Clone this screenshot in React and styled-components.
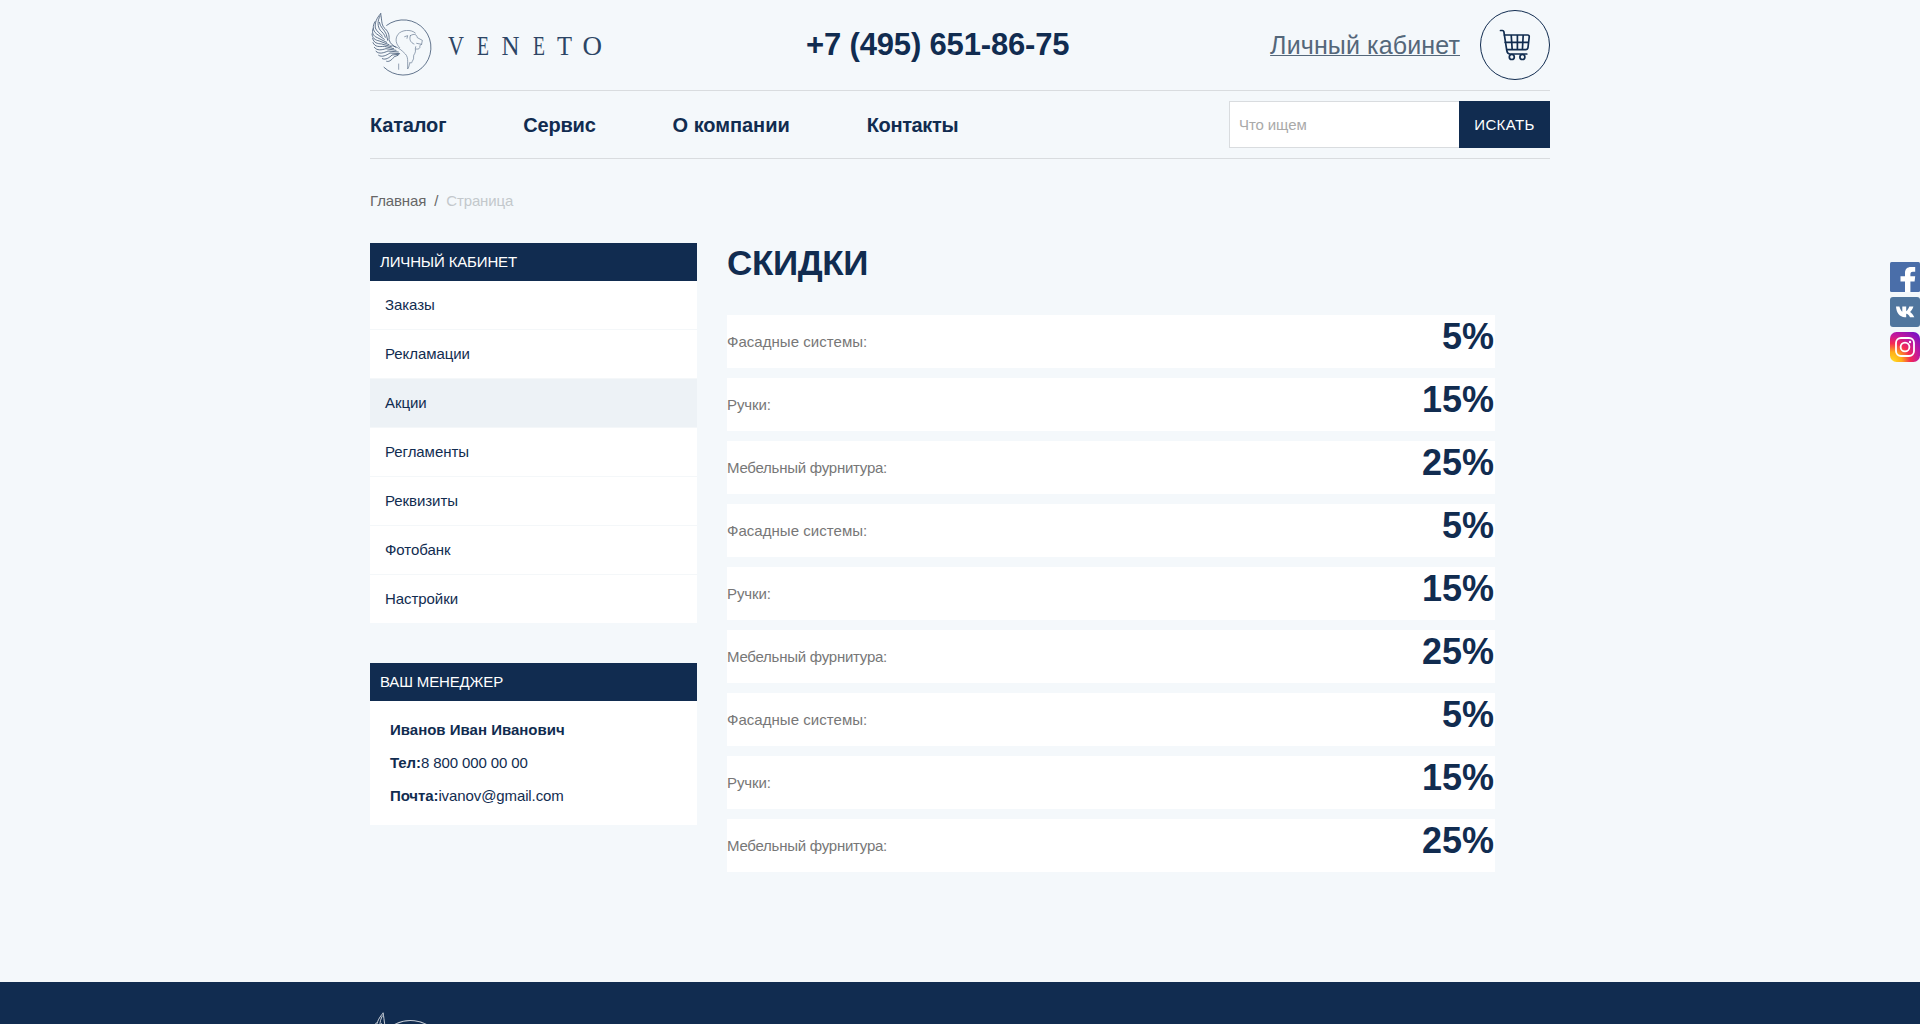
import React from "react";
import styled, { createGlobalStyle } from "styled-components";

const navy = "#112c50";
const line = "#d9dcdf";

const Global = createGlobalStyle`
  * { box-sizing: border-box; }
  html, body { margin: 0; height: 100%; overflow: hidden; }
  body {
    background: #f4f8fb;
    color: ${navy};
    font-family: "Liberation Sans", Arial, sans-serif;
    font-size: 15px;
    line-height: 18px;
  }
  a { color: inherit; text-decoration: none; }
`;

const Page = styled.div`
  height: 1024px;
  overflow: hidden;
  display: flex;
  flex-direction: column;
`;
const Container = styled.div`
  width: 1180px;
  margin: 0 auto;
`;
const TopBar = styled.header`
  height: 91px;
  display: flex;
  align-items: center;
  border-bottom: 1px solid ${line};
`;
const LogoLink = styled.a`
  display: block;
  width: 436px;
  height: 90px;
`;
const Phone = styled.a`
  font-size: 31px;
  line-height: 36px;
  font-weight: 700;
  letter-spacing: -0.16px;
`;
const Account = styled.div`
  margin-left: auto;
  display: flex;
  align-items: center;
  gap: 20px;
`;
const AccountLink = styled.a`
  color: #54677a;
  font-size: 25px;
  line-height: 30px;
  letter-spacing: 0.13px;
  text-decoration: underline;
  text-decoration-thickness: 1px;
`;
const CartButton = styled.a`
  width: 70px;
  height: 70px;
  border: 1px solid ${navy};
  border-radius: 50%;
  display: grid;
  place-items: center;
`;
const NavBar = styled.nav`
  height: 68px;
  display: flex;
  align-items: center;
  border-bottom: 1px solid ${line};
`;
const NavList = styled.div`
  display: flex;
  gap: 77px;
  font-size: 20px;
  line-height: 24px;
  font-weight: 700;
`;
const NavLink = styled.a`
  letter-spacing: ${(p) => p.$tracking}px;
`;
const Search = styled.form`
  margin-left: auto;
  display: flex;
  height: 47px;
`;
const SearchInput = styled.input`
  width: 230px;
  padding: 0 10px 0 9px;
  border: 1px solid ${line};
  border-right: 0;
  border-radius: 0;
  background: #fff;
  font: 15px "Liberation Sans", Arial, sans-serif;
  letter-spacing: -0.1px;
  &::placeholder { color: #a9a9a9; }
`;
const SearchButton = styled.button`
  width: 91px;
  padding: 0;
  border: 0;
  background: ${navy};
  color: #fff;
  font: 15px "Liberation Sans", Arial, sans-serif;
  letter-spacing: 0.4px;
`;
const Crumbs = styled.div`
  display: flex;
  gap: 8px;
  margin-top: 33px;
  color: #666;
  letter-spacing: -0.13px;
`;
const CurrentCrumb = styled.span`
  color: #c3c8cc;
`;
const Columns = styled.div`
  display: flex;
  gap: 30px;
  margin-top: 33px;
`;
const Sidebar = styled.aside`
  width: 327px;
  display: flex;
  flex-direction: column;
  gap: 40px;
`;
const Panel = styled.section`
  background: #fff;
`;
const PanelTitle = styled.div`
  height: 38px;
  padding: 0 10px;
  line-height: 38px;
  background: ${navy};
  color: #fff;
  text-transform: uppercase;
  letter-spacing: -0.15px;
`;
const MenuItem = styled.a`
  display: block;
  height: 49px;
  padding: 0 15px;
  line-height: 48px;
  letter-spacing: -0.06px;
  border-bottom: 1px solid #f4f7f9;
  background: ${(p) => (p.$active ? "#edf2f6" : "#fff")};
  &:last-child { height: 48px; border-bottom: 0; }
`;
const ManagerInfo = styled.div`
  height: 124px;
  padding: 20px;
  display: flex;
  flex-direction: column;
  gap: 15px;
`;
const Contact = styled.div`
  letter-spacing: -0.1px;
`;
const Main = styled.main`
  width: 768px;
`;
const Title = styled.h1`
  margin: 0;
  font-size: 35px;
  line-height: 40px;
  height: 72px;
  letter-spacing: -0.35px;
`;
const Discounts = styled.div`
  display: flex;
  flex-direction: column;
  gap: 10px;
`;
const DiscountRow = styled.div`
  height: 53px;
  display: flex;
  justify-content: space-between;
  background: #fff;
  line-height: 53px;
  color: #777;
`;
const DiscountName = styled.span`
  letter-spacing: ${(p) => p.$tracking}px;
`;
const Percent = styled.span`
  padding-right: 1px;
  font-size: 36px;
  font-weight: 700;
  line-height: 43px;
  color: ${navy};
`;
const Footer = styled.footer`
  margin-top: 110px;
  height: 42px;
  flex: none;
  overflow: hidden;
  background: ${navy};
`;
const Social = styled.div`
  position: fixed;
  right: 0;
  top: 262px;
  display: flex;
  flex-direction: column;
  gap: 5px;
  svg { display: block; }
`;

function Emblem({ color }) {
  return (
    <g fill="none" stroke={color} strokeLinecap="round" strokeLinejoin="round">
      <path d="M80 76A83 83 0 1 1 72 202" strokeWidth="2.6" opacity=".75" />
      <g strokeWidth="2.4" opacity=".8">
        <path d="M62 41C50 54 44 68 46 84C50 94 58 99 67 108" />
        <path d="M62 41C66 62 64 72 72 83C83 92 89 103 87 119C91 132 99 137 108 142" />
        <path d="M60 48C52 63 52 79 61 91C67 97 74 103 76 112" />
        <path d="M58 67C60 81 73 89 79 103L83 121" />
        <path d="M45 65C37 78 38 92 49 101L73 118" />
        <path d="M39 86C35 99 39 108 52 113L80 127" />
        <path d="M36 102C37 115 45 120 58 123L87 134" />
        <path d="M38 115C41 129 52 131 65 132L94 140" />
        <path d="M39 128C45 142 59 140 73 139L101 146" />
        <path d="M43 142C51 153 65 150 78 146L108 151" />
        <path d="M48 154C58 164 72 158 84 153L115 156" />
        <path d="M56 166C66 173 79 166 90 159L119 161" />
        <path d="M67 176C77 181 88 173 96 165L116 163" />
        <path d="M80 184C89 187 97 177 103 170L114 166" />
      </g>
      <g strokeWidth="1.8" opacity=".7">
        <path d="M166 99C153 87 125 89 114 103C104 117 108 133 119 143" />
        <path d="M92 137C112 138 125 151 136 162C142 168 143 176 143 184V207C149 198 147 192 150 187C154 195 156 184 159 180C163 177 158 166 164 161C169 153 164 147 167 140" />
        <path d="M134 110L143 107L141 115M151 107C147 119 152 128 162 132M151 107C164 99 170 104 172 113L187 121L185 132L179 138C182 144 176 149 168 147M170 130L185 133" />
        <path d="M116 192V208" />
      </g>
    </g>
  );
}

const letters = [
  ["V", 448, 16],
  ["E", 477, 12],
  ["N", 501.5, 18],
  ["E", 533, 12],
  ["T", 557, 15],
  ["O", 582.5, 19.5],
];

function Logo() {
  return (
    <svg width="250" height="90" viewBox="0 0 250 90">
      <g transform="translate(-10 0) scale(.33333)">
        <Emblem color={navy} />
      </g>
      <g fill="#2c4565" fontFamily="Liberation Serif, serif" fontSize="28">
        {letters.map(([char, x, width]) => (
          <text key={x} x={x - 370} y="54.5" textLength={width} lengthAdjust="spacingAndGlyphs">
            {char}
          </text>
        ))}
      </g>
    </svg>
  );
}

function CartIcon() {
  return (
    <svg width="32" height="32" viewBox="0 0 32 32" fill="none" stroke={navy} strokeWidth="1.7" strokeLinecap="round" strokeLinejoin="round">
      <path d="M1.5 1.5H3.4Q4.6 1.5 4.9 2.8L7.8 21.7Q8.3 25 11 25H27.8" />
      <path d="M5.4 6H28.6Q30.4 6 30.2 8L29 18.5Q28.7 20.7 26.6 20.7H8M6.2 13.3H29.4M12.2 6L13.2 20.7M18.4 6V20.7M24.2 6L23.4 20.7" />
      <circle cx="12.8" cy="28" r="2.5" />
      <circle cx="23.4" cy="28" r="2.5" />
    </svg>
  );
}

const nav = [
  ["Каталог", -0.17],
  ["Сервис", -0.2],
  ["О компании", -0.04],
  ["Контакты", -0.35],
];
const menu = ["Заказы", "Рекламации", "Акции", "Регламенты", "Реквизиты", "Фотобанк", "Настройки"];
const groups = [
  ["Фасадные системы:", "5%", 0.04],
  ["Ручки:", "15%", -0.1],
  ["Мебельный фурнитура:", "25%", -0.25],
];
const discounts = [...groups, ...groups, ...groups];

export default function App() {
  return (
    <>
      <Global />
      <Page>
        <Container>
          <TopBar>
            <LogoLink><Logo /></LogoLink>
            <Phone>+7 (495) 651-86-75</Phone>
            <Account>
              <AccountLink>Личный кабинет</AccountLink>
              <CartButton><CartIcon /></CartButton>
            </Account>
          </TopBar>
          <NavBar>
            <NavList>
              {nav.map(([t, tracking]) => <NavLink key={t} $tracking={tracking}>{t}</NavLink>)}
            </NavList>
            <Search>
              <SearchInput placeholder="Что ищем" />
              <SearchButton type="button">ИСКАТЬ</SearchButton>
            </Search>
          </NavBar>
          <Crumbs>
            <a>Главная</a>
            <span>/</span>
            <CurrentCrumb>Страница</CurrentCrumb>
          </Crumbs>
          <Columns>
            <Sidebar>
              <Panel>
                <PanelTitle>Личный кабинет</PanelTitle>
                <div>
                  {menu.map((t) => <MenuItem key={t} $active={t === "Акции"}>{t}</MenuItem>)}
                </div>
              </Panel>
              <Panel>
                <PanelTitle>Ваш менеджер</PanelTitle>
                <ManagerInfo>
                  <div><b>Иванов Иван Иванович</b></div>
                  <Contact><b>Тел:</b>8 800 000 00 00</Contact>
                  <Contact><b>Почта:</b>ivanov@gmail.com</Contact>
                </ManagerInfo>
              </Panel>
            </Sidebar>
            <Main>
              <Title>СКИДКИ</Title>
              <Discounts>
                {discounts.map(([name, value, tracking], i) => (
                  <DiscountRow key={i}>
                    <DiscountName $tracking={tracking}>{name}</DiscountName>
                    <Percent>{value}</Percent>
                  </DiscountRow>
                ))}
              </Discounts>
            </Main>
          </Columns>
        </Container>
        <Footer>
          <Container>
            <svg width="120" height="42" viewBox="0 0 120 42">
              <g transform="translate(-12 14.5) scale(.405)">
                <Emblem color="#fff" />
              </g>
            </svg>
          </Container>
        </Footer>
      </Page>
      <Social>
        <svg width="30" height="30" viewBox="0 0 30 30">
          <rect width="30" height="30" rx="1.5" fill="#4a6ea9" />
          <path d="M15 30V19.4H10.5V14.3H15V11C15 7 17.3 5 21 5H25.2V9.7H22.7Q20.4 9.7 20.4 11.8V14.3H25.2L24.6 19.4H20.4V30Z" fill="#fff" />
        </svg>
        <svg width="30" height="30" viewBox="0 0 30 30">
          <rect width="30" height="30" rx="3" fill="#50769e" />
          <path d="M6 9.6H9.4C10.1 12.2 11.3 14.2 12.3 14.8V9.6H16.2V14.2C17.4 13.8 18.6 11.5 19.3 9.6H23.4C22.8 12 21.2 13.9 20.1 14.9C21.7 16 23.5 18 24.3 20.2H20C19.2 18.3 17.5 17 16.2 16.8V20.2H14.8C9.8 20.2 6.4 16.2 6 9.6Z" fill="#fff" />
        </svg>
        <svg width="30" height="30" viewBox="0 0 30 30">
          <defs>
            <radialGradient id="insta" cx="0.08" cy="0.98" r="1.25">
              <stop offset="0" stopColor="#ffdc22" />
              <stop offset=".25" stopColor="#ffae18" />
              <stop offset=".48" stopColor="#f42a53" />
              <stop offset=".7" stopColor="#c4189b" />
              <stop offset="1" stopColor="#7411c8" />
            </radialGradient>
          </defs>
          <rect width="30" height="30" rx="6.5" fill="url(#insta)" />
          <g fill="none" stroke="#fff" strokeWidth="1.8">
            <rect x="6" y="6" width="18" height="18" rx="5" />
            <circle cx="15" cy="15" r="4.4" />
          </g>
          <circle cx="20" cy="10" r="1.2" fill="#fff" />
        </svg>
      </Social>
    </>
  );
}
